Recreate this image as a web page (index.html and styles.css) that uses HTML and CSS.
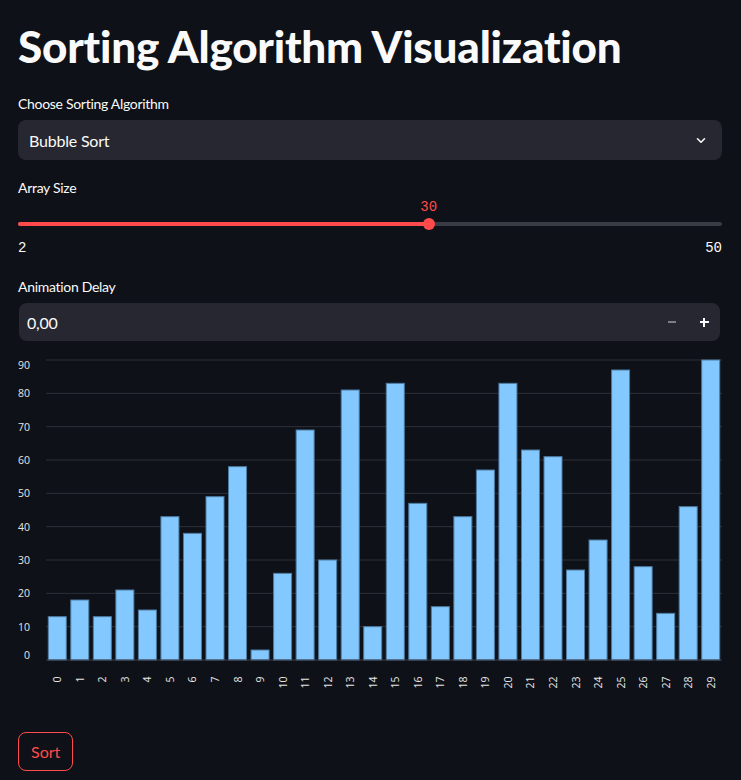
FILE: index.html
```html
<!DOCTYPE html>
<html lang="en">
<head>
<meta charset="utf-8">
<title>Sorting Algorithm Visualization</title>
<link rel="stylesheet" href="styles.css">
</head>
<body>
<main class="app">
  <h1 class="title">Sorting Algorithm Visualization</h1>

  <div class="field">
    <label class="label">Choose Sorting Algorithm</label>
    <div class="select">
      <span class="select-value">Bubble Sort</span>
      <svg class="chevron" width="10" height="7" viewBox="0 0 10 7"><path d="M1.5 1.8 L5 5.2 L8.5 1.8" fill="none" stroke="#fafafa" stroke-width="1.6" stroke-linecap="round" stroke-linejoin="round"/></svg>
    </div>
  </div>

  <div class="field slider-field">
    <label class="label">Array Size</label>
    <div class="slider">
      <div class="slider-value-row"><span class="slider-value" style="left: 58.33%">30</span></div>
      <div class="track">
        <div class="track-fill" style="width: 58.33%"></div>
        <div class="thumb" style="left: 58.33%"></div>
      </div>
      <div class="slider-range"><span>2</span><span>50</span></div>
    </div>
  </div>

  <div class="field">
    <label class="label">Animation Delay</label>
    <div class="number-input">
      <span class="number-value">0,00</span>
      <div class="steppers">
        <span class="step step-minus"><span class="bar-h"></span></span>
        <span class="step step-plus"><span class="bar-h"></span><span class="bar-v"></span></span>
      </div>
    </div>
  </div>

  <svg class="chart" width="704" height="352" viewBox="0 0 704 352">
    <g class="grid">
      <line x1="28" x2="704" y1="10" y2="10"/>
      <line x1="28" x2="704" y1="43.33" y2="43.33"/>
      <line x1="28" x2="704" y1="76.67" y2="76.67"/>
      <line x1="28" x2="704" y1="110" y2="110"/>
      <line x1="28" x2="704" y1="143.33" y2="143.33"/>
      <line x1="28" x2="704" y1="176.67" y2="176.67"/>
      <line x1="28" x2="704" y1="210" y2="210"/>
      <line x1="28" x2="704" y1="243.33" y2="243.33"/>
      <line x1="28" x2="704" y1="276.67" y2="276.67"/>
    </g>
    <g class="yticks">
      <text x="12" y="15">90</text>
      <text x="12" y="43.33">80</text>
      <text x="12" y="76.67">70</text>
      <text x="12" y="110">60</text>
      <text x="12" y="143.33">50</text>
      <text x="12" y="176.67">40</text>
      <text x="12" y="210">30</text>
      <text x="12" y="243.33">20</text>
      <text x="12" y="276.67">10</text>
      <text x="12" y="305">0</text>
    </g>
    <g class="bars">
      <rect x="30.27" y="266.67" width="18" height="43.33"/>
      <rect x="52.80" y="250" width="18" height="60"/>
      <rect x="75.33" y="266.67" width="18" height="43.33"/>
      <rect x="97.87" y="240" width="18" height="70"/>
      <rect x="120.40" y="260" width="18" height="50"/>
      <rect x="142.93" y="166.67" width="18" height="143.33"/>
      <rect x="165.47" y="183.33" width="18" height="126.67"/>
      <rect x="188.00" y="146.67" width="18" height="163.33"/>
      <rect x="210.53" y="116.67" width="18" height="193.33"/>
      <rect x="233.07" y="300" width="18" height="10"/>
      <rect x="255.60" y="223.33" width="18" height="86.67"/>
      <rect x="278.13" y="80" width="18" height="230"/>
      <rect x="300.67" y="210" width="18" height="100"/>
      <rect x="323.20" y="40" width="18" height="270"/>
      <rect x="345.73" y="276.67" width="18" height="33.33"/>
      <rect x="368.27" y="33.33" width="18" height="276.67"/>
      <rect x="390.80" y="153.33" width="18" height="156.67"/>
      <rect x="413.33" y="256.67" width="18" height="53.33"/>
      <rect x="435.87" y="166.67" width="18" height="143.33"/>
      <rect x="458.40" y="120" width="18" height="190"/>
      <rect x="480.93" y="33.33" width="18" height="276.67"/>
      <rect x="503.47" y="100" width="18" height="210"/>
      <rect x="526.00" y="106.67" width="18" height="203.33"/>
      <rect x="548.53" y="220" width="18" height="90"/>
      <rect x="571.07" y="190" width="18" height="120"/>
      <rect x="593.60" y="20" width="18" height="290"/>
      <rect x="616.13" y="216.67" width="18" height="93.33"/>
      <rect x="638.67" y="263.33" width="18" height="46.67"/>
      <rect x="661.20" y="156.67" width="18" height="153.33"/>
      <rect x="683.73" y="10" width="18" height="300"/>
    </g>
    <line class="axis" x1="28" x2="704" y1="310" y2="310"/>
    <g class="xticks">
      <text transform="translate(39.27,326.5) rotate(-90)">0</text>
      <text transform="translate(61.80,326.5) rotate(-90)">1</text>
      <text transform="translate(84.33,326.5) rotate(-90)">2</text>
      <text transform="translate(106.87,326.5) rotate(-90)">3</text>
      <text transform="translate(129.40,326.5) rotate(-90)">4</text>
      <text transform="translate(151.93,326.5) rotate(-90)">5</text>
      <text transform="translate(174.47,326.5) rotate(-90)">6</text>
      <text transform="translate(197.00,326.5) rotate(-90)">7</text>
      <text transform="translate(219.53,326.5) rotate(-90)">8</text>
      <text transform="translate(242.07,326.5) rotate(-90)">9</text>
      <text transform="translate(264.60,326.5) rotate(-90)">10</text>
      <text transform="translate(287.13,326.5) rotate(-90)">11</text>
      <text transform="translate(309.67,326.5) rotate(-90)">12</text>
      <text transform="translate(332.20,326.5) rotate(-90)">13</text>
      <text transform="translate(354.73,326.5) rotate(-90)">14</text>
      <text transform="translate(377.27,326.5) rotate(-90)">15</text>
      <text transform="translate(399.80,326.5) rotate(-90)">16</text>
      <text transform="translate(422.33,326.5) rotate(-90)">17</text>
      <text transform="translate(444.87,326.5) rotate(-90)">18</text>
      <text transform="translate(467.40,326.5) rotate(-90)">19</text>
      <text transform="translate(489.93,326.5) rotate(-90)">20</text>
      <text transform="translate(512.47,326.5) rotate(-90)">21</text>
      <text transform="translate(535.00,326.5) rotate(-90)">22</text>
      <text transform="translate(557.53,326.5) rotate(-90)">23</text>
      <text transform="translate(580.07,326.5) rotate(-90)">24</text>
      <text transform="translate(602.60,326.5) rotate(-90)">25</text>
      <text transform="translate(625.13,326.5) rotate(-90)">26</text>
      <text transform="translate(647.67,326.5) rotate(-90)">27</text>
      <text transform="translate(670.20,326.5) rotate(-90)">28</text>
      <text transform="translate(692.73,326.5) rotate(-90)">29</text>
    </g>
  </svg>

  <button class="btn">Sort</button>
</main>
</body>
</html>
```

FILE: styles.css
```css
html, body {
  margin: 0;
  padding: 0;
  background: #0e1117;
  color: #fafafa;
  font-family: "Lato", "Noto Sans", sans-serif;
}

.app {
  display: flex;
  flex-direction: column;
  align-items: stretch;
  padding: 21px 19px 0 18px;
  height: 780px;
  box-sizing: border-box;
}

.title {
  margin: 0;
  font-size: 44px;
  line-height: 51px;
  font-weight: 900;
  letter-spacing: -0.22px;
  color: #fafafa;
}

.field {
  display: flex;
  flex-direction: column;
}

.label {
  display: block;
  font-size: 14px;
  line-height: 20px;
  height: 20px;
  letter-spacing: -0.3px;
  color: #fafafa;
}

.field:nth-of-type(1) {
  margin-top: 22px;
}

.field .label {
  margin-bottom: 6px;
}

.select {
  height: 40px;
  background: #262730;
  border-radius: 8px;
  display: flex;
  align-items: center;
  justify-content: space-between;
  padding: 0 16px 0 11px;
}

.select-value {
  font-size: 16px;
  letter-spacing: -0.2px;
}

.chevron {
  display: block;
}

.slider-field {
  margin-top: 18px;
}

.slider-field .label {
  margin-bottom: 0;
}

.slider {
  display: flex;
  flex-direction: column;
}

.slider-value-row {
  position: relative;
  height: 19px;
}

.slider-value {
  position: absolute;
  top: 0;
  transform: translateX(-50%);
  font-family: "Liberation Mono", "DejaVu Sans Mono", monospace;
  font-size: 14px;
  line-height: 19px;
  color: #ff4b4b;
}

.track {
  position: relative;
  height: 4px;
  margin: 5px 0;
  background: #3a3c45;
  border-radius: 2px;
}

.track-fill {
  height: 4px;
  background: #ff4b4b;
  border-radius: 2px;
}

.thumb {
  position: absolute;
  top: 50%;
  width: 12px;
  height: 12px;
  margin: -6px 0 0 -6px;
  background: #ff4b4b;
  border-radius: 50%;
}

.slider-range {
  display: flex;
  justify-content: space-between;
  margin-top: 7px;
  font-family: "Liberation Mono", "DejaVu Sans Mono", monospace;
  font-size: 14px;
  line-height: 20px;
  color: #fafafa;
}

.slider-field + .field {
  margin-top: 19px;
}

.number-input {
  height: 38px;
  background: #262730;
  border-radius: 8px;
  display: flex;
  align-items: center;
  justify-content: space-between;
  padding: 0 0 0 8px;
  margin-left: 1px;
  margin-right: 2px;
}

.number-value {
  font-size: 16px;
  letter-spacing: -0.2px;
}

.steppers {
  display: flex;
  height: 100%;
}

.step {
  position: relative;
  width: 32px;
  height: 100%;
  display: flex;
  align-items: center;
  justify-content: center;
}

.step-minus .bar-h {
  width: 8px;
  height: 2px;
  background: #7d7e86;
}

.step-plus .bar-h {
  position: absolute;
  width: 9px;
  height: 2px;
  background: #fafafa;
}

.step-plus .bar-v {
  position: absolute;
  width: 2px;
  height: 9px;
  background: #fafafa;
}

.chart {
  display: block;
  margin-top: 9px;
  overflow: visible;
}

.grid line {
  stroke: #2e313a;
  stroke-width: 1;
}

.axis {
  stroke: #3b3f4a;
  stroke-width: 1;
}

.bars rect {
  fill: #83c9ff;
  stroke: #4f7ca3;
  stroke-width: 1;
}

.yticks text {
  font-family: "Open Sans", "Noto Sans", sans-serif;
  font-size: 10.5px;
  fill: #e6e6e6;
  text-anchor: end;
  dominant-baseline: central;
}

.xticks text {
  font-family: "Open Sans", "Noto Sans", sans-serif;
  font-size: 10.5px;
  fill: #e6e6e6;
  text-anchor: end;
  dominant-baseline: central;
}

.btn {
  align-self: flex-start;
  margin-top: 30px;
  height: 39px;
  padding: 0 12px;
  background: transparent;
  border: 1px solid #ff4b4b;
  border-radius: 8px;
  color: #ff4b4b;
  font-family: "Lato", "Noto Sans", sans-serif;
  font-size: 16px;
}
```
